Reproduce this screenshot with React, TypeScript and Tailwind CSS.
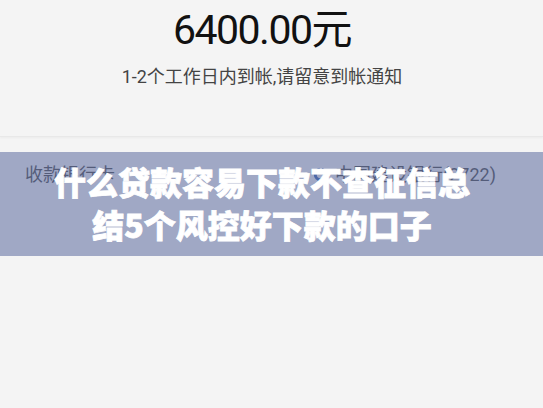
export default function App() {
  return (
    <div className="relative h-[408px] w-full overflow-hidden bg-[#f4f4f4] font-['Roboto','Noto_Sans_CJK_SC',sans-serif]">
      <div className="flex h-[137px] flex-col items-center border-b border-[#e8e8e8] pr-[19px] shadow-[0_1px_2px_rgba(0,0,0,0.04)]">
        <div className="mt-[6px] text-[41px] leading-[48px] tracking-[-1.5px] text-[#111]">6400.00元</div>
        <div className="mt-[11px] text-[18px] leading-[24px] text-[#444]">1-2个工作日内到帐,请留意到帐通知</div>
      </div>

      <div className="flex h-[74px] items-center justify-between px-[25px] text-[18px] text-[#333]">
        <span>收款银行卡</span>
        <div className="flex items-center gap-[7px] pr-[22px]">
          <svg width="15" height="15" viewBox="0 0 20 20">
            <circle cx="10" cy="10" r="7" fill="none" stroke="#1d4ea8" strokeWidth="4" />
            <rect x="9" y="0" width="3" height="8" fill="#f4f4f4" />
          </svg>
          <span>中国建设银行(2722)</span>
        </div>
      </div>

      <div className="absolute left-0 right-0 top-[152px] flex h-[104px] flex-col items-center justify-center bg-[rgba(106,120,167,0.61)] pb-[2px] pr-[19px] text-center font-['Noto_Sans_CJK_SC',sans-serif] text-[32px] font-black leading-[43px] text-white [-webkit-text-stroke:0.8px_white]">
        <div>什么贷款容易下款不查征信总</div>
        <div>结5个风控好下款的口子</div>
      </div>
    </div>
  )
}
